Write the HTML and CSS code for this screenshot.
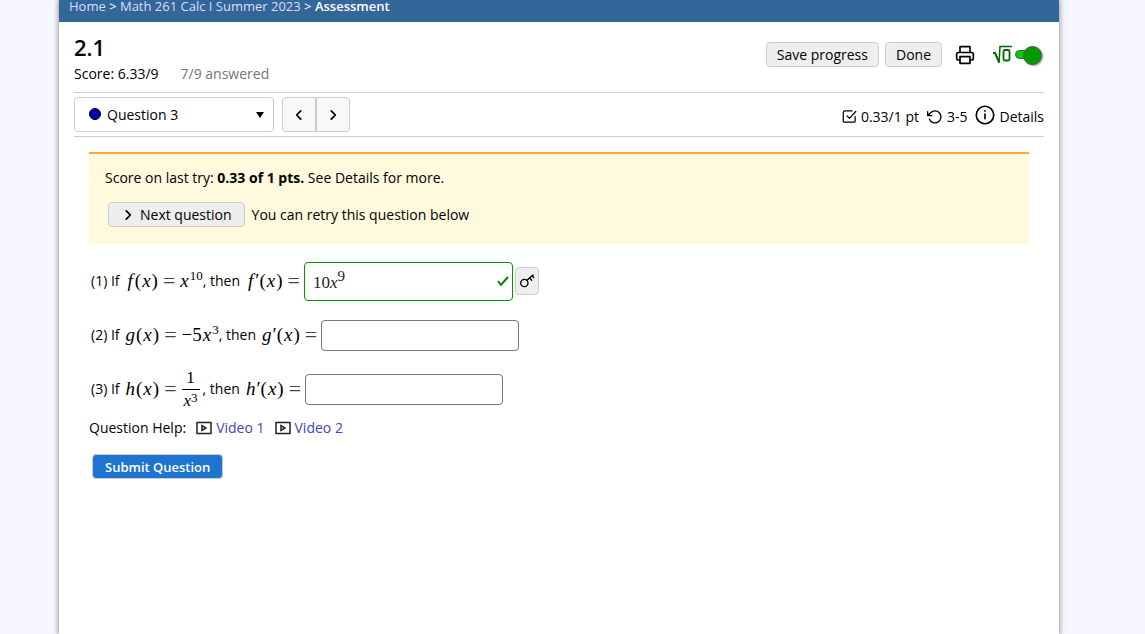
FILE: index.html
```html
<!DOCTYPE html>
<html lang="en">

<head>
    <meta charset="UTF-8">
    <meta name="viewport" content="width=device-width, initial-scale=1.0">
    <title>2.1 - Assessment</title>
    <link rel="stylesheet" href="styles.css">
</head>

<body>
    <div class="mainbody">
        <nav class="breadcrumb">
            <a href="#">Home</a> &gt; <a href="#">Math 261 Calc I Summer 2023</a> &gt; <b>Assessment</b>
        </nav>
        <div class="assess">
            <header class="header">
                <div class="header-title">
                    <h1>2.1</h1>
                    <div class="scores">
                        <span>Score: 6.33/9</span>
                        <span class="answered">7/9 answered</span>
                    </div>
                </div>
                <div class="header-tools">
                    <button type="button" class="btn">Save progress</button>
                    <button type="button" class="btn">Done</button>
                    <button type="button" class="plain" aria-label="Print">
                        <svg class="icon" width="20" height="20" viewBox="0 0 24 24">
                            <path d="M6 9V2h12v7M6 18H4a2 2 0 0 1-2-2v-5a2 2 0 0 1 2-2h16a2 2 0 0 1 2 2v5a2 2 0 0 1-2 2h-2M6 14h12v8H6z" />
                        </svg>
                    </button>
                    <label class="eq-toggle">
                        <svg width="19" height="19" viewBox="0 0 19 19" fill="none" stroke="#060">
                            <path d="M0 8h2l4 9" stroke-width="2" />
                            <path d="M6 18L7 1.500h12" stroke-width="1.500" />
                            <rect x="10.500" y="5" width="6" height="10.500" rx="1.500" stroke-width="1.800" />
                        </svg>
                        <input type="checkbox" class="switch" aria-label="Equation editor" checked>
                    </label>
                </div>
            </header>
            <div class="question-bar">
                <div class="picker">
                    <svg class="dot" width="14" height="14" viewBox="0 0 14 14">
                        <circle cx="7" cy="7" r="5.500" fill="#00a" stroke="#000" />
                    </svg>
                    <select class="question-select" aria-label="Question">
                        <option>Question 3</option>
                    </select>
                    <svg class="arrow" width="8" height="6" viewBox="0 0 8 6">
                        <path d="M0 0h8L4 6z" />
                    </svg>
                </div>
                <div class="pager">
                    <button type="button" aria-label="Previous question">
                        <svg class="icon" width="14" height="14" viewBox="0 0 24 24"><path d="M15 19L8 12l7-7" stroke-width="3" /></svg>
                    </button>
                    <button type="button" aria-label="Next question">
                        <svg class="icon" width="14" height="14" viewBox="0 0 24 24"><path d="M9 19l7-7-7-7" stroke-width="3" /></svg>
                    </button>
                </div>
                <div class="status">
                    <span class="status-item">
                        <svg class="icon" width="15" height="15" viewBox="0 0 24 24">
                            <path d="M8 11l4 4L22 4M21 12v7a2 2 0 0 1-2 2H4a2 2 0 0 1-2-2V5a2 2 0 0 1 2-2h12" />
                        </svg>
                        0.33/1 pt
                    </span>
                    <span class="status-item">
                        <svg class="icon" width="16" height="16" viewBox="0 0 24 24">
                            <path d="M1 4v6h6M3.500 15a9 9 0 1 0 2-9.500L1 10" />
                        </svg>
                        3-5
                    </span>
                    <button type="button" class="plain status-item">
                        <svg class="icon info" width="20" height="20" viewBox="0 0 24 24">
                            <circle cx="12" cy="12" r="10.500" />
                            <path d="M12 16.500v-5.500M12 7v.5" />
                        </svg>
                        Details
                    </button>
                </div>
            </div>
            <main class="question">
                <section class="notice">
                    <p>Score on last try: <b>0.33 of 1 pts.</b> See Details for more.</p>
                    <div class="retry">
                        <button type="button" class="btn next">
                            <svg class="icon" width="14" height="14" viewBox="0 0 24 24"><path d="M9 19l7-7-7-7" stroke-width="3" /></svg>
                            Next question
                        </button>
                        <span>You can retry this question below</span>
                    </div>
                </section>
                <div class="part">
                    <span>(1) If</span>
                    <span class="math"><i class="fn">f</i>(<i>x</i>)<span class="rel">=</span><i>x</i><sup>10</sup></span><span>, then</span>
                    <span class="math"><i class="fn">f</i>′(<i>x</i>)<span class="rel last">=</span></span>
                    <div class="answer">
                        <span class="mq" role="textbox" contenteditable="true" aria-label="Answer to part 1">10<i>x</i><sup>9</sup></span>
                        <svg class="check" width="12" height="12" viewBox="0 0 12 12"><path d="M1 6l3 4 7-8" /></svg>
                    </div>
                    <button type="button" class="key" aria-label="Show answer">
                        <svg class="icon" width="16" height="16" viewBox="0 0 24 24">
                            <circle cx="8" cy="15" r="5.500" />
                            <path d="M12 11l9-8M16 7l3 4M20 4l2 3" />
                        </svg>
                    </button>
                </div>
                <div class="part">
                    <label for="part2">(2) If</label>
                    <span class="math"><i>g</i>(<i>x</i>)<span class="rel">=</span>−5<i>x</i><sup>3</sup></span><span>, then</span>
                    <span class="math"><i>g</i>′(<i>x</i>)<span class="rel last">=</span></span>
                    <input type="text" id="part2" class="blank">
                </div>
                <div class="part">
                    <label for="part3">(3) If</label>
                    <span class="math"><i>h</i>(<i>x</i>)<span class="rel">=</span><span class="frac"><span class="num">1</span><span class="den"><i>x</i><sup>3</sup></span></span></span><span class="after-frac">, then</span>
                    <span class="math"><i>h</i>′(<i>x</i>)<span class="rel last">=</span></span>
                    <input type="text" id="part3" class="blank">
                </div>
                <div class="help">
                    <span class="help-label">Question Help:</span>
                    <a href="#">
                        <svg class="icon" width="16" height="14" viewBox="0 0 16 14"><path d="M1 1.500h14v11H1zM6 4.500v5L10 7z" stroke-width="1.500" /></svg>
                        Video 1
                    </a>
                    <a href="#">
                        <svg class="icon" width="16" height="14" viewBox="0 0 16 14"><path d="M1 1.500h14v11H1zM6 4.500v5L10 7z" stroke-width="1.500" /></svg>
                        Video 2
                    </a>
                </div>
                <button type="button" class="btn submit">Submit Question</button>
            </main>
        </div>
    </div>
</body>

</html>
```
FILE: styles.css
```css
* {
    box-sizing: border-box;
}

body {
    margin: 0;
    background: #f6f6ff;
    color: #000;
    font: 14px/20px "Trebuchet MS", "Open Sans", sans-serif;
}

button,
select,
input {
    font: inherit;
    color: inherit;
}

svg {
    flex: none;
}

.mainbody {
    margin: 0 86px 0 59px;
    min-height: 100vh;
    background: #fff;
    box-shadow: 0 0 5px 1px #999;
}

.breadcrumb {
    height: 22px;
    padding: 0 10px;
    font-size: 13px;
    line-height: 12px;
    color: #fff;
    background: #336699;
}

.breadcrumb a {
    color: #ddf;
    text-decoration: none;
}

.breadcrumb b {
    font-weight: 600;
}

.assess {
    padding: 0 15px;
}

.header {
    display: flex;
    justify-content: space-between;
    height: 71px;
    padding-top: 12px;
    border-bottom: 1px solid #ccc;
}

.header h1 {
    margin: 0;
    font-size: 22px;
    line-height: 26px;
    font-weight: 600;
}

.scores {
    display: flex;
    gap: 22px;
    line-height: 28px;
}

.answered {
    color: #757575;
}

.header-tools {
    display: flex;
    align-items: center;
    gap: 6px;
    height: 41px;
}

.btn {
    height: 25px;
    padding: 0 10px;
    line-height: 20px;
    border: 1px solid #ccc;
    border-radius: 4px;
    background: #eee;
}

.plain {
    border: 0;
    padding: 0;
    background: none;
}

.header-tools .plain {
    display: flex;
    margin: 0 12px 0 7px;
}

.icon {
    fill: none;
    stroke: currentColor;
    stroke-width: 2;
    stroke-linecap: round;
    stroke-linejoin: round;
}

.eq-toggle {
    display: flex;
    align-items: center;
    gap: 3px;
    padding-right: 2px;
}

.switch {
    appearance: none;
    position: relative;
    width: 27px;
    height: 9px;
    margin: 0;
    border: 1px solid #555;
    border-radius: 5px;
    background: #0c0;
}

.switch::after {
    content: "";
    position: absolute;
    top: -5px;
    right: -1px;
    width: 17px;
    height: 17px;
    border: 1px solid #555;
    border-radius: 50%;
    background: #090;
    box-shadow: 1px 1px 2px #999;
}

.question-bar {
    display: flex;
    align-items: center;
    height: 44px;
    border-bottom: 1px solid #ccc;
}

.picker {
    position: relative;
    width: 200px;
    margin-right: 8px;
}

.question-select {
    display: block;
    appearance: none;
    width: 100%;
    height: 35px;
    padding: 0 32px;
    border: 1px solid #ccc;
    border-radius: 4px;
    background: #fff;
}

.dot {
    position: absolute;
    top: 10px;
    left: 14px;
}

.arrow {
    position: absolute;
    top: 15px;
    right: 10px;
}

.pager {
    display: flex;
}

.pager button {
    display: flex;
    align-items: center;
    justify-content: center;
    width: 34px;
    height: 35px;
    border: 1px solid #ccc;
    border-radius: 4px 0 0 4px;
    background: #f8f8f8;
}

.pager button + button {
    border-radius: 0 4px 4px 0;
}

.status {
    display: flex;
    gap: 8px;
    margin-left: auto;
    padding-top: 4px;
}

.status-item {
    display: flex;
    align-items: center;
    gap: 4px;
}

.status .info {
    margin-bottom: 4px;
}

.question {
    padding: 15px;
}

.notice {
    height: 92px;
    padding: 14px 16px;
    border-top: 2px solid #fa3;
    background: #fff9dd;
}

.notice p {
    margin: 0 0 14px;
}

.retry {
    display: flex;
    align-items: center;
    gap: 7px;
    padding-left: 3px;
}

.next {
    display: flex;
    align-items: center;
    gap: 5px;
    padding: 0 12px;
}

.part {
    display: flex;
    align-items: center;
    height: 54px;
    padding-left: 2px;
}

.notice + .part {
    margin-top: 10px;
}

.math {
    display: flex;
    align-items: center;
    gap: 1px;
    margin-left: 6px;
    font: 19px/24px "Liberation Serif", serif;
}

.math .fn {
    padding: 0 1px 0 2px;
}

.math sup {
    font-size: 13px;
    line-height: 12px;
    padding-bottom: 10px;
}

.rel {
    margin: 0 4px;
    font-size: 22px;
    color: #444;
}

.last {
    margin-right: 4px;
}

.frac {
    display: flex;
    flex-direction: column;
    align-items: center;
    font-size: 17px;
    line-height: 18px;
}

.num {
    padding-bottom: 2px;
}

.den {
    display: flex;
    padding: 2px 2px 0;
    border-top: 1px solid #000;
}

.den sup {
    padding: 0;
}

.after-frac {
    padding-left: 3px;
}

.answer {
    display: flex;
    align-items: center;
    justify-content: space-between;
    width: 209px;
    height: 39px;
    padding: 0 3px 0 8px;
    border: 1px solid #090;
    border-radius: 4px;
}

.mq {
    display: flex;
    align-items: center;
    flex: 1;
    padding-top: 4px;
    outline: 0;
    color: #222;
    font: 17px/24px "Liberation Serif", serif;
}

.mq sup {
    font-size: 15px;
    line-height: 12px;
    padding-bottom: 15px;
}

.check {
    fill: none;
    stroke: #080;
    stroke-width: 2;
}

.key {
    display: flex;
    align-items: center;
    justify-content: center;
    width: 24px;
    height: 28px;
    margin-left: 2px;
    padding: 0;
    border: 1px solid #ccc;
    border-radius: 4px;
    background: #eee;
}

.blank {
    width: 198px;
    height: 31px;
    padding: 0 8px;
    border: 1px solid #777;
    border-radius: 4px;
    background: #fff;
}

.help {
    display: flex;
    align-items: center;
    gap: 10px;
    margin-top: 2px;
}

.help a {
    display: flex;
    align-items: center;
    gap: 4px;
    color: #44b;
    text-decoration: none;
}

.help .icon {
    stroke: #222;
    stroke-linejoin: miter;
}

.submit {
    margin: 16px 3px;
    padding: 0 12px;
    font-size: 13px;
    color: #fff;
    font-weight: 600;
    background: #1e74d1;
}
```
